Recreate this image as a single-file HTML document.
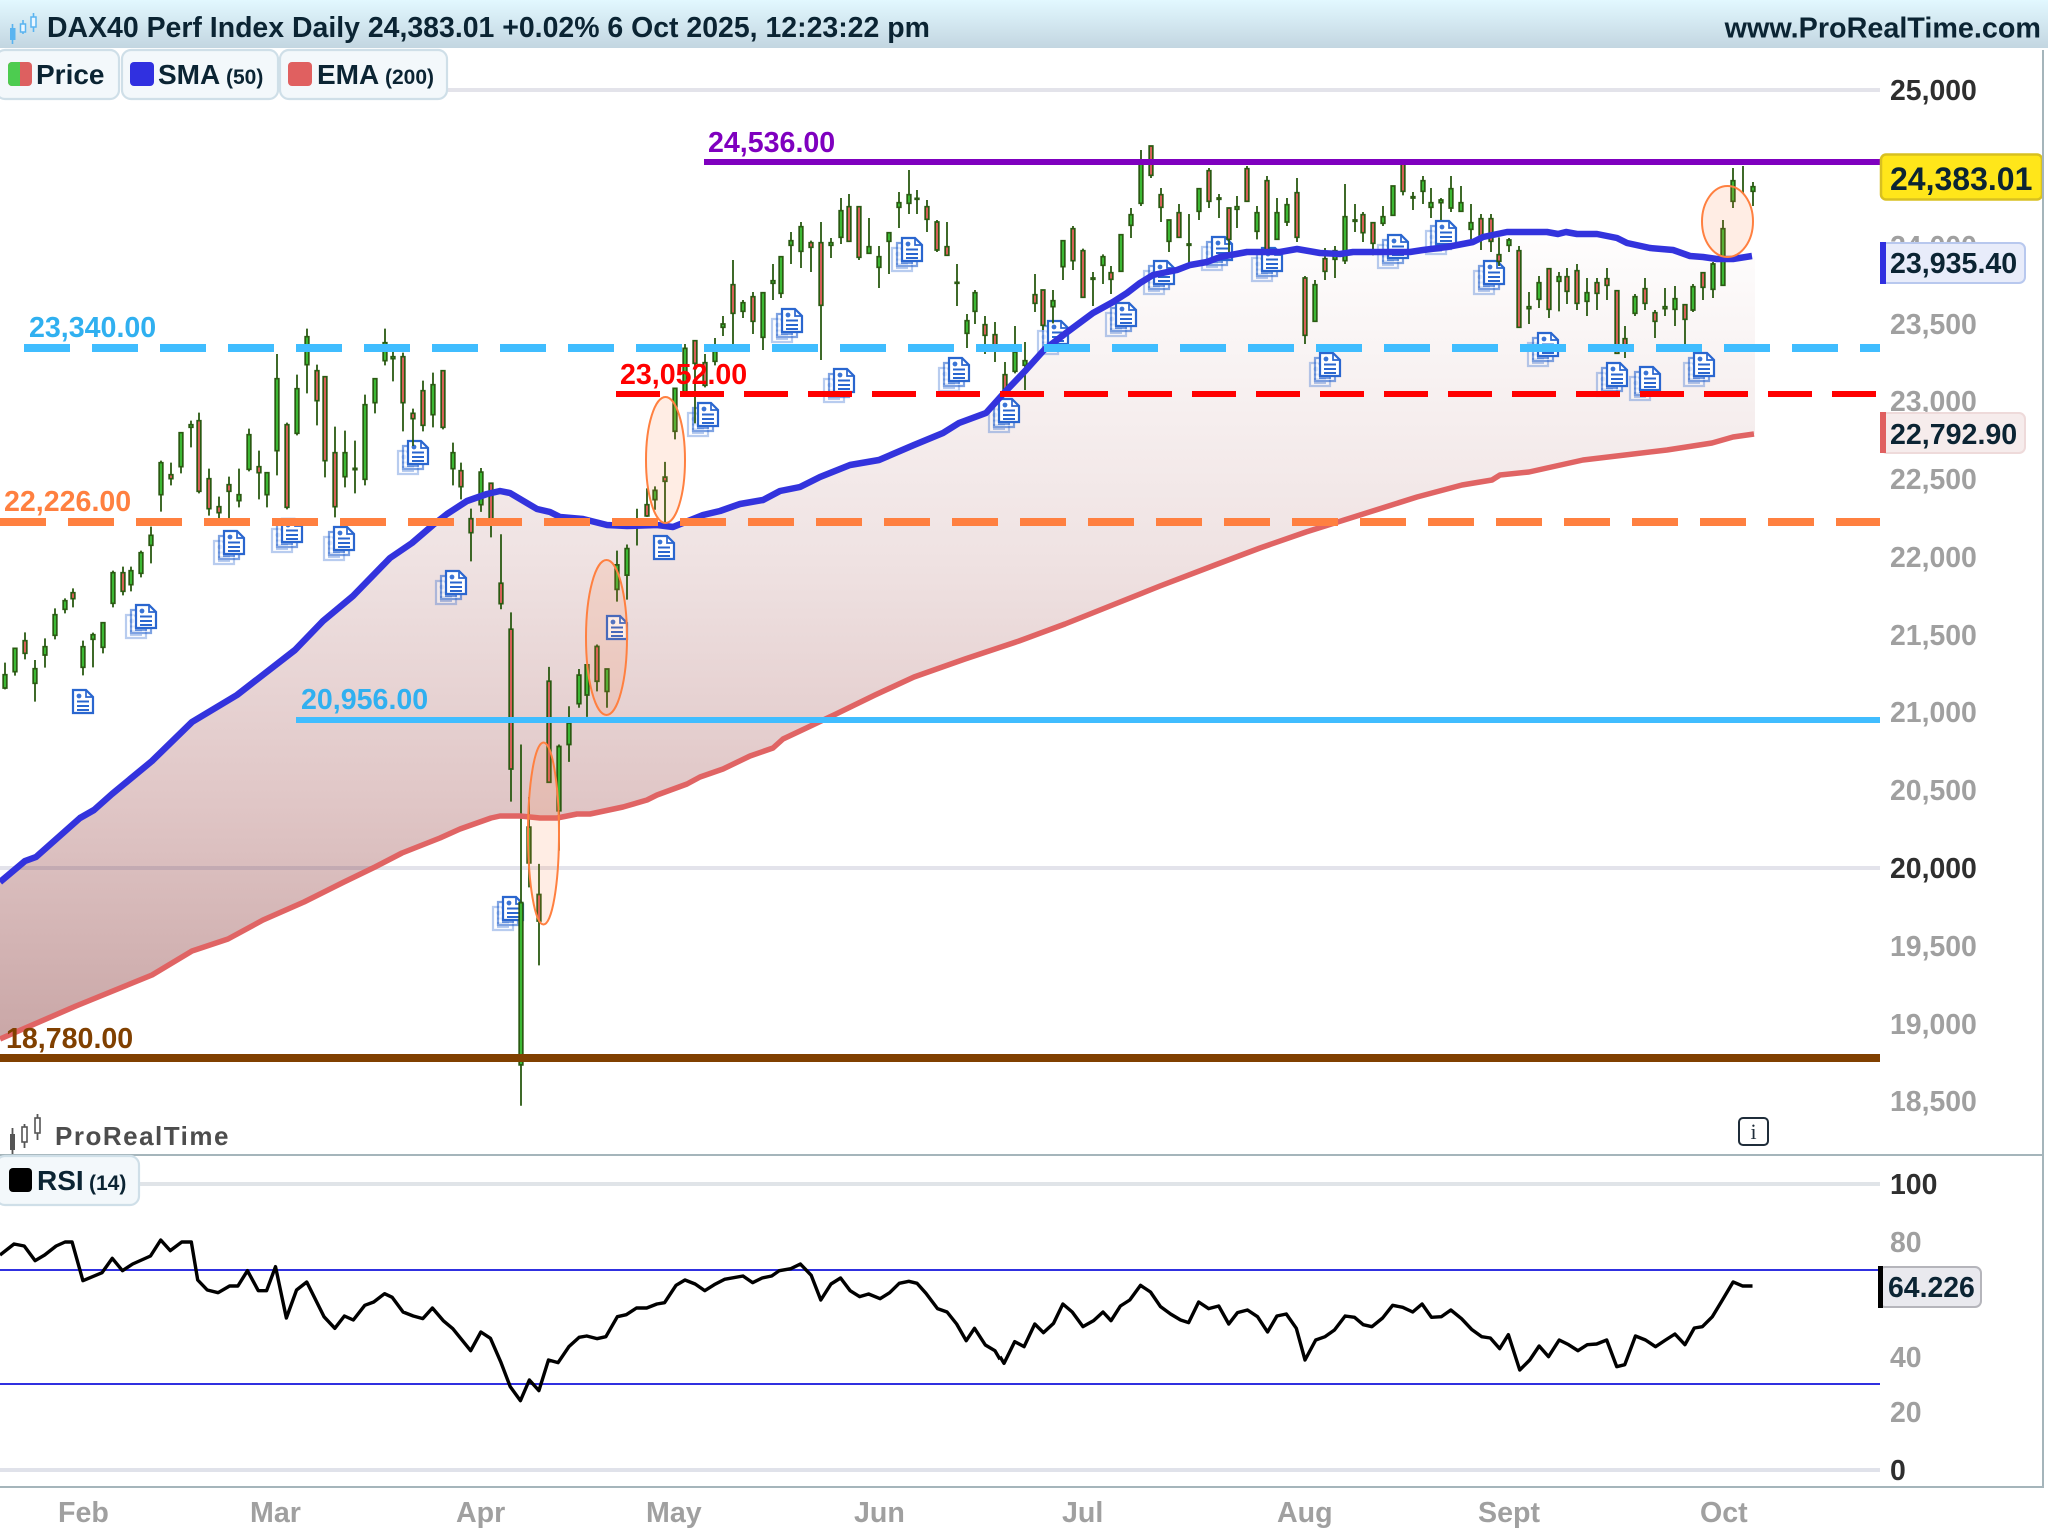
<!DOCTYPE html>
<html><head><meta charset="utf-8"><title>DAX40 chart</title>
<style>
html,body{margin:0;padding:0;background:#fff;width:2048px;height:1536px;overflow:hidden}
svg{display:block}
text{font-family:"Liberation Sans",Arial,sans-serif;font-weight:700}
.w{fill:none;stroke:#2a5a12;stroke-width:1.8;vector-effect:non-scaling-stroke}
.g{fill:#3dbb35;stroke:#2a5a12;stroke-width:1.7;vector-effect:non-scaling-stroke}
.r{fill:#d9605a;stroke:#2a5a12;stroke-width:1.7;vector-effect:non-scaling-stroke}
.k{fill:none;stroke:#000;stroke-width:3.4;stroke-linejoin:round;vector-effect:non-scaling-stroke}
.ax{font-size:28.4px;fill:#a0a0a0}
.axd{font-size:28.4px;fill:#2f2f2f}
.dk{fill:#0b2433}
.t{font-size:28.6px;fill:#a0a0a0}
.el{fill:#ff8040;fill-opacity:.14;stroke:#ff8040;stroke-width:2}
</style></head><body>
<svg xmlns="http://www.w3.org/2000/svg" width="2048" height="1536" viewBox="0 0 2048 1536">
<defs>
<linearGradient id="hd" x1="0" y1="0" x2="0" y2="1"><stop offset="0" stop-color="#e2f8ff"/><stop offset="1" stop-color="#c3d6e1"/></linearGradient>
<linearGradient id="fl" gradientUnits="userSpaceOnUse" x1="0" y1="240" x2="0" y2="1045"><stop offset="0" stop-color="#fefdfd"/><stop offset=".4" stop-color="#efe2e2"/><stop offset=".7" stop-color="#e0c6c6"/><stop offset="1" stop-color="#c9a6a6"/></linearGradient>
<g id="d1"><path d="M1 1H14L21 8V24H1Z" fill="#fff" stroke="#2a66cf" stroke-width="2.2"/><path d="M14 1V8H21" fill="none" stroke="#2a66cf" stroke-width="1.7"/><circle cx="7" cy="7" r="2.4" fill="#3a74d6"/><path d="M5 12.5H17M5 17H17M5 21H17" stroke="#2a66cf" stroke-width="2.1" fill="none"/></g>
<g id="d3"><use href="#d1" x="-10" y="10" opacity=".33"/><use href="#d1" x="-5" y="5" opacity=".6"/><use href="#d1"/></g>
</defs>
<rect width="2048" height="1536" fill="#fff"/>

<!-- fill between averages -->
<polygon fill="url(#fl)" points="0,882 25,861 36,857 80,818 94,810 112,794 129,780 152,761 192,722 237,695 295,650 323,621 353,596 390,558 412,543 433,525 447,514 467,501 487,494 500,491 510,493 537,509 550,512 560,517 583,519 607,525 627,526 657,525 673,527 703,515 720,511 740,504 763,500 780,491 800,487 820,477 850,465 879,460 914,445 943,433 959,423 986,413 1004,393 1026,370 1044,350 1066,333 1093,313 1113,302 1127,293 1140,283 1153,275 1177,270 1190,265 1207,262 1220,257 1247,252 1280,252 1297,249 1320,253 1340,254 1353,252 1410,252 1423,250 1447,247 1473,242 1483,237 1507,232 1547,232 1558,234 1566,232 1577,234 1597,234 1617,238 1627,243 1650,248 1673,250 1690,256 1703,257 1717,259 1733,259 1755,256 1755,434 1733,437 1712,443 1667,450 1625,455 1583,460 1529,472 1500,475 1492,480 1462,485 1417,497 1306,532 1215,565 1110,606 1019,641 914,677 836,714 800,731 783,739 773,748 750,756 723,769 700,777 687,784 657,795 647,800 623,807 590,814 577,814 557,818 540,818 520,816 500,816 491,818 460,829 440,838 402,853 375,867 344,882 304,902 263,920 228,939 192,951 152,975 76,1006 0,1039"/>

<!-- grid -->
<path d="M447 90H1880" stroke="#e3e3ea" stroke-width="4"/>
<path d="M0 868H1880" stroke="#464676" stroke-opacity=".15" stroke-width="4"/>
<path d="M139 1184H1880" stroke="#e0e4e8" stroke-width="4"/>
<path d="M0 1470H1880" stroke="#e0e2ea" stroke-width="4"/>

<!-- doc icons -->
<use href="#d3" x="135" y="604"/><use href="#d3" x="223" y="530"/><use href="#d3" x="281" y="518"/><use href="#d3" x="333" y="526"/><use href="#d3" x="407" y="440"/><use href="#d3" x="445" y="570"/><use href="#d1" x="72" y="689"/><use href="#d3" x="502" y="896"/><use href="#d1" x="606" y="615"/><use href="#d1" x="653" y="535"/><use href="#d3" x="697" y="402"/><use href="#d3" x="781" y="308"/><use href="#d3" x="833" y="368"/><use href="#d3" x="901" y="237"/><use href="#d3" x="948" y="357"/><use href="#d3" x="998" y="398"/><use href="#d3" x="1047" y="320"/><use href="#d3" x="1115" y="302"/><use href="#d3" x="1153" y="260"/><use href="#d3" x="1211" y="236"/><use href="#d3" x="1261" y="247"/><use href="#d3" x="1319" y="352"/><use href="#d3" x="1387" y="234"/><use href="#d3" x="1435" y="220"/><use href="#d3" x="1483" y="260"/><use href="#d3" x="1537" y="332"/><use href="#d3" x="1606" y="362"/><use href="#d3" x="1639" y="366"/><use href="#d3" x="1693" y="352"/>

<!-- candles group 1 -->
<g transform="translate(0 320) scale(.33333)">
<path class="w" d="M15 1028V1108M45 985V1067M75 937V1018M105 1020V1145M135 955V1043M165 865V958M195 835V880M219 805V862M249 962V1066M279 938V1042M309 908V1000M339 752V862M369 740V826M393 740V814M423 692V772M453 620V730M483 422V575M513 428V496M543 338V460M573 302V382M597 278V520M627 446V587M657 530V594M687 470V594M717 446V562M747 326V454M777 392V538M801 458V562M831 102V466M861 308V568M891 164V346M921 26V220M951 134V316M975 170V472M1005 320V592M1035 332V502M1065 362V520M1095 224V496M1125 176V280M1155 26V136M1179 92V184M1209 98V334M1239 266V378M1269 182V334M1299 158V322M1329 152V328M1359 368V496M1383 428V538M1413 566V724"/>
<path class="g" d="M9.5 1064h11V1104h-11zM39.5 985h11V1055h-11zM99.5 1046h11V1090h-11zM129.5 980h11V1005h-11zM159.5 884h11V946h-11zM189.5 842h11V868h-11zM243.5 980h11V1042h-11zM273.5 944h11V958h-11zM303.5 908h11V982h-11zM333.5 758h11V850h-11zM387.5 752h11V794h-11zM417.5 698h11V760h-11zM447.5 646h11V676h-11zM477.5 428h11V524h-11zM537.5 338h11V440h-11zM567.5 314h11V322h-11zM711.5 524h11V542h-11zM741.5 344h11V448h-11zM795.5 458h11V524h-11zM825.5 176h11V392h-11zM885.5 206h11V340h-11zM915.5 50h11V134h-11zM1029.5 398h11V470h-11zM1059.5 445h11V449h-11zM1089.5 254h11V478h-11zM1119.5 176h11V248h-11zM1149.5 68h11V122h-11zM1173.5 110h11V116h-11zM1293.5 194h11V284h-11zM1353.5 398h11V446h-11z"/>
<path class="r" d="M69.5 962h11V1000h-11zM213.5 818h11V836h-11zM363.5 758h11V814h-11zM507.5 464h11V476h-11zM591.5 302h11V514h-11zM621.5 476h11V566h-11zM651.5 560h11V578h-11zM681.5 494h11V514h-11zM771.5 440h11V458h-11zM855.5 314h11V562h-11zM945.5 152h11V242h-11zM969.5 170h11V422h-11zM999.5 398h11V560h-11zM1203.5 110h11V248h-11zM1233.5 280h11V296h-11zM1263.5 212h11V316h-11zM1323.5 152h11V322h-11zM1377.5 452h11V500h-11zM1407.5 596h11V638h-11z"/>
</g>
<!-- candles group 2 -->
<g transform="translate(440 320) scale(.33333 .5102)">
<path class="w" d="M123 290V376M153 320V426M183 420V567M213 573V944M243 832V1540M267 935V1112M297 1066V1265M327 680V906M357 832V1040M387 757V866M417 684V760M441 676V778M471 636V728M501 684V760M531 452V552M561 440V548M591 370V442M621 330V386M645 326V372M675 278V396M705 134V234"/>
<path class="g" d="M117.5 298h11V362h-11zM237.5 1142h11V1460h-11zM261.5 994h11V1064h-11zM351.5 836h11V962h-11zM381.5 790h11V832h-11zM411.5 696h11V752h-11zM435.5 676h11V735h-11zM495.5 684h11V728h-11zM525.5 480h11V528h-11zM555.5 448h11V500h-11zM699.5 134h11V218h-11zM639.5 334h11V352h-11z"/>
<path class="r" d="M147.5 320h11V390h-11zM177.5 516h11V556h-11zM207.5 606h11V880h-11zM291.5 1126h11V1178h-11zM321.5 708h11V906h-11zM465.5 640h11V708h-11zM615.5 362h11V384h-11zM669.5 308h11V316h-11z"/>
</g>
<!-- candles group 3 -->
<g transform="translate(680 150) scale(.33333)">
<path class="w" d="M15 582V725M45 572V820M75 612V712M105 564V646M129 498V558M159 330V582M189 450V504M219 426V552M249 428V600M279 342V450M303 320V444M333 246V342M363 216V354M393 272V366M423 216V630M453 264V324M483 144V282M507 132V274M537 170V330M567 204V310M597 288V414M627 248V372M657 126V234M687 60V192M711 120V192M741 150V246M771 210V306M801 216V316M831 342V468M861 492V594M885 420V522M915 498V612M945 516V636M975 636V730M1005 528V670M1035 576V720M1065 372V486M1089 420V540M1119 420V520M1149 272V390M1179 228V360M1209 296V442M1239 366V468"/>
<path class="g" d="M9.5 595h11V725h-11zM99.5 604h11V634h-11zM123.5 522h11V532h-11zM183.5 458h11V484h-11zM243.5 428h11V562h-11zM273.5 392h11V400h-11zM297.5 320h11V430h-11zM327.5 272h11V286h-11zM357.5 230h11V304h-11zM447.5 278h11V286h-11zM477.5 182h11V262h-11zM561.5 290h11V310h-11zM591.5 320h11V352h-11zM621.5 248h11V274h-11zM651.5 158h11V172h-11zM681.5 134h11V160h-11zM705.5 145h11V148h-11zM825.5 397h11V400h-11zM855.5 512h11V550h-11zM879.5 428h11V484h-11zM999.5 606h11V664h-11zM1029.5 632h11V646h-11zM1113.5 452h11V470h-11zM1143.5 272h11V350h-11zM1233.5 384h11V388h-11z"/>
<path class="r" d="M39.5 572h11V640h-11zM69.5 638h11V706h-11zM153.5 404h11V490h-11zM213.5 440h11V514h-11zM387.5 278h11V292h-11zM417.5 278h11V466h-11zM501.5 170h11V274h-11zM531.5 170h11V322h-11zM735.5 170h11V208h-11zM765.5 216h11V300h-11zM795.5 290h11V316h-11zM909.5 524h11V556h-11zM939.5 554h11V590h-11zM969.5 674h11V725h-11zM1059.5 434h11V460h-11zM1083.5 420h11V526h-11zM1173.5 236h11V332h-11zM1203.5 302h11V442h-11z"/>
</g>
<!-- candles group 4 -->
<g transform="translate(1080 140) scale(.33333)">
<path class="w" d="M69 343V432M93 378V462M123 284V394M153 204V294M183 30V198M213 18V114M243 144V246M267 240V336M297 192V292M327 222V370M357 146V240M387 84V204M417 162V234M447 204V345M471 168V264M501 78V185M531 198V298M561 108V345M591 174V298M621 174V258M651 114V306M675 408V612M705 420V544M735 324V420M765 318V414M795 132V372M825 192V276M849 216V306M879 248V346M909 198V258M939 138V228M969 60V166M999 156V210M1029 108V192M1053 144V234M1083 174V240"/>
<path class="g" d="M63.5 350h11V376h-11zM117.5 284h11V394h-11zM147.5 224h11V256h-11zM177.5 70h11V190h-11zM261.5 240h11V304h-11zM321.5 312h11V316h-11zM351.5 146h11V214h-11zM411.5 174h11V178h-11zM465.5 200h11V208h-11zM525.5 218h11V274h-11zM585.5 218h11V298h-11zM615.5 194h11V246h-11zM699.5 434h11V544h-11zM759.5 332h11V358h-11zM789.5 230h11V362h-11zM819.5 240h11V244h-11zM903.5 230h11V250h-11zM933.5 138h11V226h-11zM993.5 170h11V174h-11zM1023.5 122h11V154h-11zM1047.5 188h11V202h-11zM1077.5 180h11V188h-11z"/>
<path class="r" d="M87.5 398h11V418h-11zM207.5 18h11V106h-11zM237.5 164h11V202h-11zM291.5 218h11V292h-11zM381.5 92h11V184h-11zM441.5 204h11V298h-11zM495.5 86h11V184h-11zM555.5 122h11V340h-11zM645.5 158h11V292h-11zM669.5 414h11V586h-11zM729.5 356h11V394h-11zM843.5 224h11V278h-11zM873.5 248h11V310h-11zM963.5 60h11V154h-11z"/>
</g>
<!-- candles group 5 -->
<g transform="translate(1440 150) scale(.33333)">
<path class="w" d="M33 78V186M63 108V184M93 162V268M123 192V300M153 192V306M177 262V348M207 264V306M237 288V532M267 426V522M297 378V474M327 356V504M357 366V484M381 354V462M411 342V480M441 384V498M471 384V480M501 354V450M531 422V612M555 528V624M585 432V498M615 384V480M645 480V564M675 414V498M705 408V528M735 464V588M759 402V486M789 368V450M819 336V444M849 210V406M879 54V174M909 48V130M939 96V168"/>
<path class="g" d="M27.5 116h11V174h-11zM57.5 158h11V184h-11zM87.5 218h11V238h-11zM201.5 270h11V286h-11zM261.5 470h11V476h-11zM291.5 398h11V448h-11zM351.5 380h11V394h-11zM435.5 428h11V454h-11zM579.5 440h11V490h-11zM669.5 470h11V476h-11zM699.5 446h11V478h-11zM753.5 410h11V480h-11zM813.5 342h11V418h-11zM843.5 236h11V406h-11zM873.5 92h11V154h-11zM933.5 110h11V124h-11z"/>
<path class="r" d="M117.5 206h11V262h-11zM147.5 206h11V274h-11zM171.5 314h11V334h-11zM231.5 302h11V532h-11zM321.5 356h11V478h-11zM375.5 380h11V424h-11zM405.5 362h11V460h-11zM465.5 398h11V430h-11zM495.5 386h11V406h-11zM525.5 422h11V610h-11zM549.5 566h11V590h-11zM609.5 416h11V460h-11zM639.5 488h11V514h-11zM729.5 464h11V508h-11zM783.5 368h11V412h-11z"/>
</g>

<!-- averages -->
<polyline fill="none" stroke="#e06464" stroke-width="5.5" stroke-linejoin="round" points="0,1039 76,1006 152,975 192,951 228,939 263,920 304,902 344,882 375,867 402,853 440,838 460,829 491,818 500,816 520,816 540,818 557,818 577,814 590,814 623,807 647,800 657,795 687,784 700,777 723,769 750,756 773,748 783,739 800,731 836,714 875,695 914,677 965,659 1019,641 1065,624 1110,606 1160,586 1215,565 1260,548 1306,532 1360,515 1417,497 1462,485 1492,480 1500,475 1529,472 1583,460 1625,455 1667,450 1712,443 1733,437 1754,434"/>
<polyline fill="none" stroke="#3333dd" stroke-width="6.5" stroke-linejoin="round" points="0,882 25,861 36,857 80,818 94,810 112,794 129,780 152,761 192,722 237,695 295,650 323,621 353,596 390,558 412,543 433,525 447,514 467,501 487,494 500,491 510,493 537,509 550,512 560,517 583,519 607,525 627,526 657,525 673,527 703,515 720,511 740,504 763,500 780,491 800,487 820,477 850,465 879,460 914,445 943,433 959,423 986,413 1004,393 1026,370 1044,350 1066,333 1093,313 1113,302 1127,293 1140,283 1153,275 1177,270 1190,265 1207,262 1220,257 1247,252 1280,252 1297,249 1320,253 1340,254 1353,252 1410,252 1423,250 1447,247 1473,242 1483,237 1507,232 1547,232 1558,234 1566,232 1577,234 1597,234 1617,238 1627,243 1650,248 1673,250 1690,256 1703,257 1717,259 1733,259 1752,256"/>

<!-- support / resistance -->
<path d="M704 162H1880" stroke="#7f00bf" stroke-width="6"/>
<path d="M24 348H1880" stroke="#40bdff" stroke-width="8" stroke-dasharray="46 22"/>
<path d="M0 522H1880" stroke="#ff8040" stroke-width="8" stroke-dasharray="46 22"/>
<path d="M616 394H1880" stroke="#ff0000" stroke-width="6" stroke-dasharray="44 20"/>
<path d="M296 720H1880" stroke="#40bdff" stroke-width="6"/>
<path d="M0 1058H1880" stroke="#804000" stroke-width="8"/>

<!-- ellipses -->
<ellipse class="el" cx="543.5" cy="833.5" rx="15.5" ry="91"/>
<ellipse class="el" cx="606.5" cy="637.5" rx="20.5" ry="77.5"/>
<ellipse class="el" cx="665.5" cy="460" rx="19.5" ry="63"/>
<ellipse class="el" cx="1727.5" cy="221.5" rx="25.5" ry="35.5"/>

<!-- line labels -->
<text x="29" y="337" font-size="28.6" fill="#30b0f0">23,340.00</text>
<text x="4" y="511" font-size="28.6" fill="#ff8040">22,226.00</text>
<text x="708" y="152" font-size="28.6" fill="#7f00bf">24,536.00</text>
<text x="620" y="384" font-size="28.6" fill="#ff0000">23,052.00</text>
<text x="301" y="709" font-size="28.6" fill="#30b0f0">20,956.00</text>
<text x="6" y="1048" font-size="28.6" fill="#804000">18,780.00</text>

<!-- header -->
<rect width="2048" height="48" fill="url(#hd)"/>
<path d="M12.5 24V44M23 20V34M33.5 13V32" stroke="#5ab4f0" stroke-width="1.6" fill="none"/>
<rect x="10" y="28" width="5.5" height="12" fill="#5ab4f0"/>
<rect x="20.5" y="24" width="5" height="8" fill="#eaf6ff" stroke="#5ab4f0" stroke-width="1.5"/>
<rect x="31" y="17" width="5" height="10" fill="#eaf6ff" stroke="#5ab4f0" stroke-width="1.5"/>
<text x="47" y="37" font-size="28.45" class="dk">DAX40 Perf Index Daily 24,383.01 +0.02% 6 Oct 2025, 12:23:22 pm</text>
<text x="2041" y="37.5" font-size="28.75" class="dk" text-anchor="end">www.ProRealTime.com</text>

<!-- legend tabs -->
<rect x="-4" y="50" width="123" height="49" rx="9" fill="#f3f8fb" stroke="#cfdfe8" stroke-width="2.2"/>
<rect x="122" y="50" width="156" height="49" rx="9" fill="#f3f8fb" stroke="#cfdfe8" stroke-width="2.2"/>
<rect x="280" y="50" width="167" height="49" rx="9" fill="#f3f8fb" stroke="#cfdfe8" stroke-width="2.2"/>
<rect x="8" y="62" width="24" height="24" rx="4" fill="#dd6060"/><path d="M12 62H20V86H12A4 4 0 0 1 8 82V66A4 4 0 0 1 12 62Z" fill="#4dcc50"/>
<text x="36" y="84" font-size="28" class="dk">Price</text>
<rect x="130" y="62" width="24" height="24" rx="4" fill="#3030e0"/>
<text x="158" y="84" font-size="28" class="dk">SMA</text><text x="226" y="84" font-size="21" class="dk">(50)</text>
<rect x="288" y="62" width="24" height="24" rx="4" fill="#e06060"/>
<text x="317" y="84" font-size="28" class="dk">EMA</text><text x="385" y="84" font-size="21" class="dk">(200)</text>

<!-- price axis -->
<text x="1890" y="100" class="axd">25,000</text>
<text x="1890" y="256" class="ax">24,000</text>
<text x="1890" y="334" class="ax">23,500</text>
<text x="1890" y="411" class="ax">23,000</text>
<text x="1890" y="489" class="ax">22,500</text>
<text x="1890" y="567" class="ax">22,000</text>
<text x="1890" y="645" class="ax">21,500</text>
<text x="1890" y="722" class="ax">21,000</text>
<text x="1890" y="800" class="ax">20,500</text>
<text x="1890" y="878" class="axd">20,000</text>
<text x="1890" y="956" class="ax">19,500</text>
<text x="1890" y="1034" class="ax">19,000</text>
<text x="1890" y="1111" class="ax">18,500</text>

<rect x="1881" y="154.5" width="161" height="45" rx="5" fill="#ffe61a" stroke="#d8c020" stroke-width="2.5"/>
<text x="1890" y="190" font-size="32" class="dk">24,383.01</text>
<rect x="1881" y="243" width="144" height="40" rx="6" fill="#e8ecfa" stroke="#b8c8ee" stroke-width="2"/>
<rect x="1880" y="242" width="6" height="42" fill="#3030e0"/>
<text x="1890" y="273" font-size="28.6" class="dk">23,935.40</text>
<rect x="1881" y="413" width="144" height="40" rx="6" fill="#f6ecec" stroke="#eedada" stroke-width="2"/>
<rect x="1880" y="412" width="6" height="41" fill="#e06060"/>
<text x="1890" y="444" font-size="28.6" class="dk">22,792.90</text>

<!-- logo -->
<path d="M12.5 1128V1154M24.5 1124V1148M37.5 1114V1140" stroke="#555" stroke-width="1.8" fill="none"/>
<rect x="10" y="1134" width="5" height="16" fill="#555"/>
<rect x="22" y="1127" width="5" height="15" fill="#fff" stroke="#555" stroke-width="1.6"/>
<rect x="35" y="1118" width="5" height="15" fill="#fff" stroke="#555" stroke-width="1.6"/>
<text x="55" y="1145" font-size="26" letter-spacing="1.5" fill="#4d4d4d">ProRealTime</text>
<rect x="1739" y="1118" width="29" height="27" rx="4" fill="#fff" stroke="#1f2d3a" stroke-width="2"/>
<text x="1753.5" y="1139" font-size="22" text-anchor="middle" fill="#1f2d3a" style="font-family:'Liberation Serif',serif;font-weight:400">i</text>

<!-- frames -->
<path d="M0 1155H2044M0 1487H2044M2043 50V1487" stroke="#a5b5bb" stroke-width="2" fill="none"/>

<!-- RSI -->
<rect x="-4" y="1156" width="143" height="49" rx="9" fill="#f3f8fb" stroke="#cfdfe8" stroke-width="2.2"/>
<rect x="9" y="1168" width="23" height="24" rx="4" fill="#000"/>
<text x="37" y="1190" font-size="28" class="dk">RSI</text><text x="89" y="1190" font-size="21" class="dk">(14)</text>
<path d="M0 1270H1880M0 1384H1880" stroke="#3030e0" stroke-width="2"/>
<g transform="translate(0 1120) scale(.63776 .33333)"><path class="k" d="M0 405L22 372 38 378 55 422 70 405 88 378 102 366 113 366 130 482 160 458 176 415 192 452 208 432 236 408 252 360 267 392 285 366 300 366 310 480 325 510 342 518 360 498 373 498 388 452 405 512 418 512 432 440 449 594 465 510 481 486 508 590 525 625 540 588 554 600 572 556 586 546 603 521 615 532 632 576 648 588 663 596 678 564 695 602 710 626 738 692 754 636 769 655 785 725 800 800 816 842 830 780 845 812 860 720 875 728 892 680 908 652 920 648 936 656 950 650 968 590 982 584 998 564 1014 564 1030 552 1042 548 1060 496 1074 480 1090 492 1105 512 1120 494 1136 478 1165 468 1180 488 1195 474 1210 468 1222 452 1240 446 1255 432 1272 466 1287 540 1303 492 1318 474 1333 512 1348 530 1362 522 1380 536 1395 518 1410 490 1425 484 1438 490 1452 520 1470 566 1485 576 1500 612 1515 662 1528 625 1545 675 1560 692 1568 718"/></g>
<g transform="translate(1000 1120) scale(.66890 .33333)"><path class="k" d="M0 710L6 730 22 665 36 680 52 612 65 638 80 610 94 552 108 576 124 620 140 602 154 576 166 602 180 558 194 540 210 496 225 516 240 560 255 582 270 600 282 608 297 546 312 566 327 558 342 612 355 578 370 570 385 590 400 636 414 588 428 582 443 625 456 720 472 660 486 650 500 630 516 588 530 592 543 614 556 620 572 594 587 556 602 562 617 576 631 552 645 592 660 590 674 570 690 596 705 628 720 650 733 654 747 686 760 644 777 750 792 720 806 678 820 710 836 660 850 674 864 692 878 674 892 672 907 660 922 740 934 734 950 648 965 660 980 680 995 660 1009 642 1024 674 1038 624 1050 620 1065 590 1080 540 1096 486 1110 498 1125 498"/></g>

<text x="1890" y="1194" class="axd">100</text>
<text x="1890" y="1252" class="ax">80</text>
<text x="1890" y="1367" class="ax">40</text>
<text x="1890" y="1422" class="ax">20</text>
<text x="1890" y="1480" class="axd">0</text>
<rect x="1879" y="1267" width="102" height="40" rx="6" fill="#e9e9ee" stroke="#b5b5bb" stroke-width="2"/>
<rect x="1878" y="1266" width="5" height="42" fill="#000"/>
<text x="1888" y="1297" font-size="28.4" class="dk">64.226</text>

<!-- time axis -->
<text x="58" y="1522" class="t">Feb</text>
<text x="250" y="1522" class="t">Mar</text>
<text x="456" y="1522" class="t">Apr</text>
<text x="646" y="1522" class="t">May</text>
<text x="854" y="1522" class="t">Jun</text>
<text x="1062" y="1522" class="t">Jul</text>
<text x="1277" y="1522" class="t">Aug</text>
<text x="1478" y="1522" class="t">Sept</text>
<text x="1700" y="1522" class="t">Oct</text>
</svg>
</body></html>
